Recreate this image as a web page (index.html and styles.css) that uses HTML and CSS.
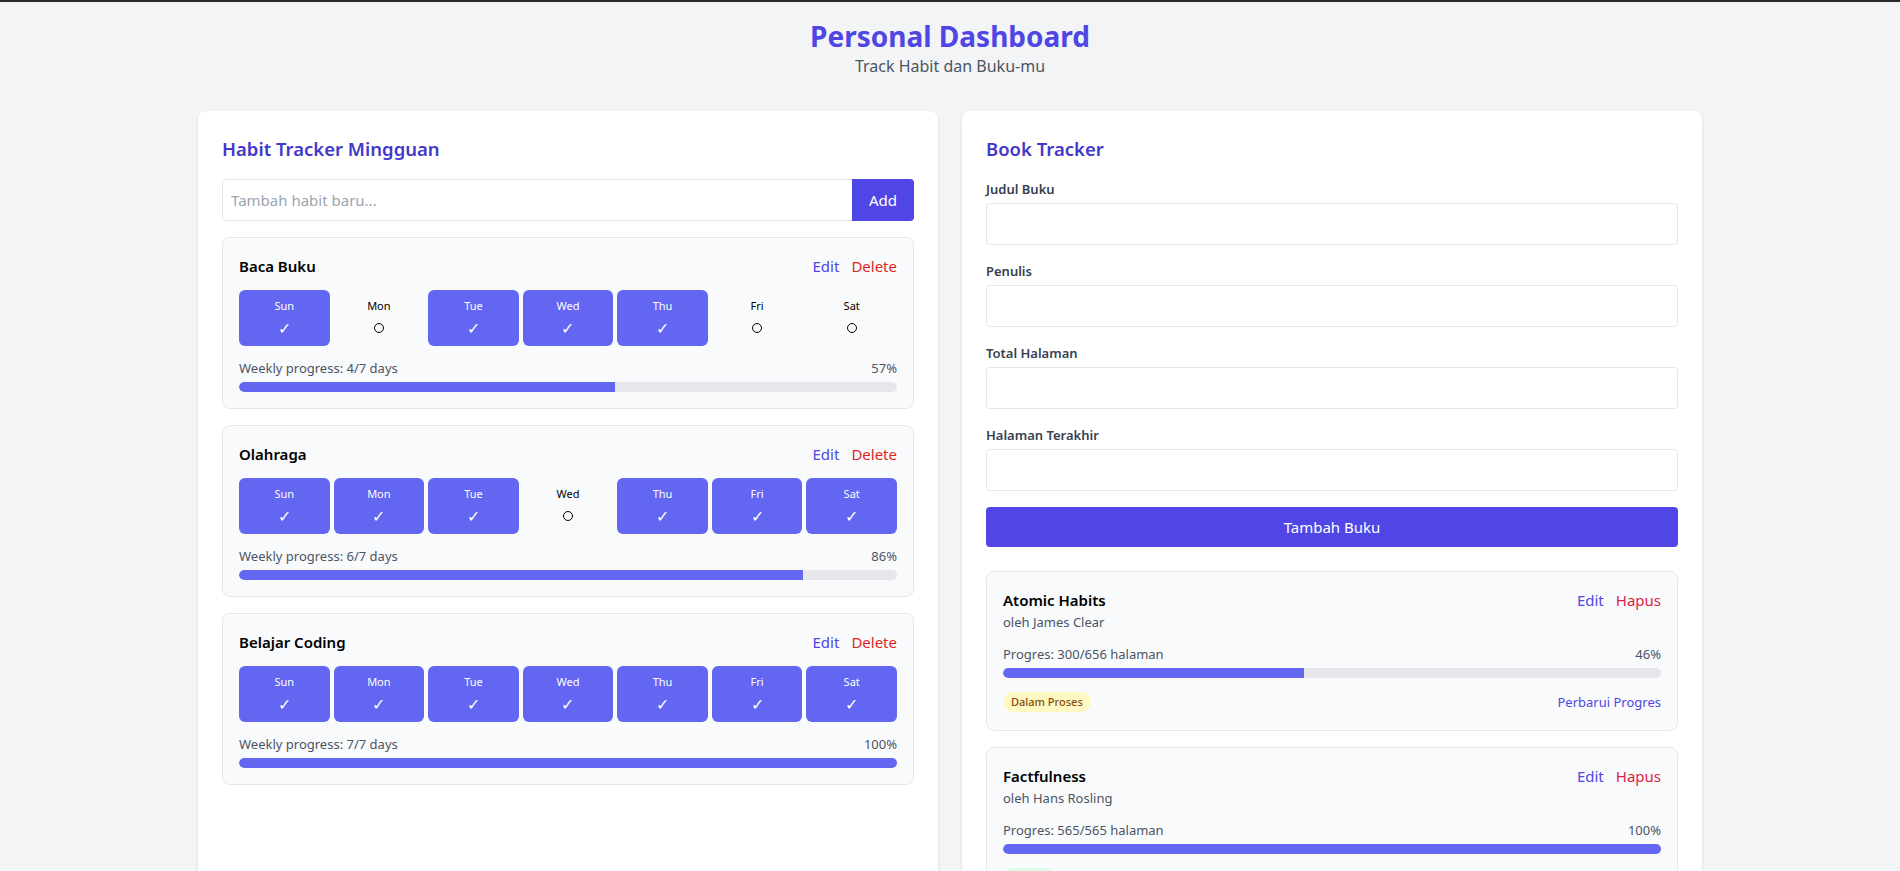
FILE: index.html
```html
<!DOCTYPE html>
<html lang="id">
<head>
<meta charset="utf-8">
<title>Personal Dashboard</title>
<link rel="stylesheet" href="styles.css">
</head>
<body>
<div class="topbar"></div>
<div class="container">
  <header class="header">
    <h1 class="title">Personal Dashboard</h1>
    <p class="subtitle">Track Habit dan Buku-mu</p>
  </header>

  <div class="grid">
    <section class="card">
      <h2 class="card-title">Habit Tracker Mingguan</h2>
      <div class="add-row">
        <input class="add-input" type="text" placeholder="Tambah habit baru...">
        <button class="add-btn">Add</button>
      </div>

      <div class="list">
        <div class="item">
          <div class="item-head">
            <span class="item-name">Baca Buku</span>
            <div class="actions"><button class="act edit">Edit</button><button class="act del">Delete</button></div>
          </div>
          <div class="days">
            <div class="day on"><span class="dl">Sun</span><span class="dm">✓</span></div>
            <div class="day"><span class="dl">Mon</span><span class="dm"><span class="ring"></span></span></div>
            <div class="day on"><span class="dl">Tue</span><span class="dm">✓</span></div>
            <div class="day on"><span class="dl">Wed</span><span class="dm">✓</span></div>
            <div class="day on"><span class="dl">Thu</span><span class="dm">✓</span></div>
            <div class="day"><span class="dl">Fri</span><span class="dm"><span class="ring"></span></span></div>
            <div class="day"><span class="dl">Sat</span><span class="dm"><span class="ring"></span></span></div>
          </div>
          <div class="prog-row"><span>Weekly progress: 4/7 days</span><span>57%</span></div>
          <div class="bar"><div class="fill" style="width:57.14%"></div></div>
        </div>

        <div class="item">
          <div class="item-head">
            <span class="item-name">Olahraga</span>
            <div class="actions"><button class="act edit">Edit</button><button class="act del">Delete</button></div>
          </div>
          <div class="days">
            <div class="day on"><span class="dl">Sun</span><span class="dm">✓</span></div>
            <div class="day on"><span class="dl">Mon</span><span class="dm">✓</span></div>
            <div class="day on"><span class="dl">Tue</span><span class="dm">✓</span></div>
            <div class="day"><span class="dl">Wed</span><span class="dm"><span class="ring"></span></span></div>
            <div class="day on"><span class="dl">Thu</span><span class="dm">✓</span></div>
            <div class="day on"><span class="dl">Fri</span><span class="dm">✓</span></div>
            <div class="day on"><span class="dl">Sat</span><span class="dm">✓</span></div>
          </div>
          <div class="prog-row"><span>Weekly progress: 6/7 days</span><span>86%</span></div>
          <div class="bar"><div class="fill" style="width:85.71%"></div></div>
        </div>

        <div class="item">
          <div class="item-head">
            <span class="item-name">Belajar Coding</span>
            <div class="actions"><button class="act edit">Edit</button><button class="act del">Delete</button></div>
          </div>
          <div class="days">
            <div class="day on"><span class="dl">Sun</span><span class="dm">✓</span></div>
            <div class="day on"><span class="dl">Mon</span><span class="dm">✓</span></div>
            <div class="day on"><span class="dl">Tue</span><span class="dm">✓</span></div>
            <div class="day on"><span class="dl">Wed</span><span class="dm">✓</span></div>
            <div class="day on"><span class="dl">Thu</span><span class="dm">✓</span></div>
            <div class="day on"><span class="dl">Fri</span><span class="dm">✓</span></div>
            <div class="day on"><span class="dl">Sat</span><span class="dm">✓</span></div>
          </div>
          <div class="prog-row"><span>Weekly progress: 7/7 days</span><span>100%</span></div>
          <div class="bar"><div class="fill" style="width:100%"></div></div>
        </div>
      </div>
    </section>

    <section class="card">
      <h2 class="card-title">Book Tracker</h2>
      <form class="book-form">
        <label class="field"><span class="label">Judul Buku</span><input class="text-input" type="text"></label>
        <label class="field"><span class="label">Penulis</span><input class="text-input" type="text"></label>
        <label class="field"><span class="label">Total Halaman</span><input class="text-input" type="text"></label>
        <label class="field"><span class="label">Halaman Terakhir</span><input class="text-input" type="text"></label>
        <button class="submit" type="button">Tambah Buku</button>
      </form>

      <div class="list books">
        <div class="item">
          <div class="item-head">
            <div>
              <div class="item-name">Atomic Habits</div>
              <div class="author">oleh James Clear</div>
            </div>
            <div class="actions"><button class="act edit">Edit</button><button class="act hapus">Hapus</button></div>
          </div>
          <div class="prog-row book-prog"><span>Progres: 300/656 halaman</span><span>46%</span></div>
          <div class="bar"><div class="fill" style="width:45.73%"></div></div>
          <div class="book-foot">
            <span class="badge yellow">Dalam Proses</span>
            <button class="act update">Perbarui Progres</button>
          </div>
        </div>

        <div class="item">
          <div class="item-head">
            <div>
              <div class="item-name">Factfulness</div>
              <div class="author">oleh Hans Rosling</div>
            </div>
            <div class="actions"><button class="act edit">Edit</button><button class="act hapus">Hapus</button></div>
          </div>
          <div class="prog-row book-prog"><span>Progres: 565/565 halaman</span><span>100%</span></div>
          <div class="bar"><div class="fill" style="width:100%"></div></div>
          <div class="book-foot">
            <span class="badge green">Selesai</span>
          </div>
        </div>
      </div>
    </section>
  </div>
</div>
</body>
</html>
```

FILE: styles.css
```css
* { box-sizing: border-box; }

body {
  margin: 0;
  background: #f3f4f6;
  font-family: "Noto Sans", "Open Sans", sans-serif;
  color: #111827;
}

.topbar {
  height: 2px;
  background: #2b2b2b;
}

.container {
  max-width: 1536px;
  margin: 0 auto;
  padding: 16px 16px 32px;
}

.header {
  text-align: center;
  margin-bottom: 33px;
}

.title {
  margin: 0;
  font-size: 28px;
  line-height: 36px;
  font-weight: 700;
  color: #4f46e5;
}

.subtitle {
  margin: 0;
  font-size: 16px;
  line-height: 24px;
  color: #4b5563;
}

.grid {
  display: grid;
  grid-template-columns: 1fr 1fr;
  gap: 24px;
}

.card {
  background: #fff;
  border-radius: 8px;
  box-shadow: 0 1px 3px rgba(0,0,0,0.1), 0 1px 2px rgba(0,0,0,0.06);
  padding: 24px;
  min-height: 900px;
}

.card-title {
  margin: 0 0 16px;
  font-size: 18.5px;
  line-height: 28px;
  font-weight: 600;
  color: #4338ca;
}

.add-row {
  display: flex;
  margin-bottom: 16px;
}

.add-input {
  flex: 1;
  height: 42px;
  padding: 8px;
  border: 1px solid #e5e7eb;
  border-right: none;
  border-radius: 4px 0 0 4px;
  font: inherit;
  font-size: 15px;
  outline: none;
}

.add-input::placeholder { color: #9ca3af; }

.add-btn {
  width: 62px;
  height: 42px;
  border: none;
  border-radius: 0 4px 4px 0;
  background: #4f46e5;
  color: #fff;
  font: inherit;
  font-size: 15px;
  padding: 0;
}

.list {
  display: flex;
  flex-direction: column;
  gap: 16px;
}

.item {
  background: #f9fafb;
  border: 1px solid #e5e7eb;
  border-radius: 8px;
  padding: 16px;
}

.item-head {
  display: flex;
  justify-content: space-between;
  align-items: flex-start;
  margin-bottom: 12px;
}

.item-name {
  font-size: 15px;
  line-height: 24px;
  font-weight: 600;
  color: #000;
}

.actions {
  display: flex;
  gap: 12px;
}

.act {
  background: none;
  border: none;
  padding: 0;
  font: inherit;
  font-size: 15px;
  line-height: 24px;
  cursor: pointer;
}

.edit { color: #4f46e5; }
.del { color: #dc2626; }
.hapus { color: #e11d48; }

.days {
  display: grid;
  grid-template-columns: repeat(7, 1fr);
  gap: 4px;
}

.day {
  height: 56px;
  padding: 8px 0;
  border-radius: 6px;
  display: flex;
  flex-direction: column;
  align-items: center;
  color: #000;
}

.day.on {
  background: #6366f1;
  color: #fff;
}

.dl {
  font-size: 11px;
  line-height: 16px;
}

.dm {
  margin-top: 4px;
  height: 20px;
  font-size: 16px;
  line-height: 20px;
  display: flex;
  align-items: center;
  justify-content: center;
}

.ring {
  display: block;
  width: 10px;
  height: 10px;
  border: 1.3px solid #000;
  border-radius: 50%;
}

.prog-row {
  display: flex;
  justify-content: space-between;
  margin-top: 12px;
  margin-bottom: 4px;
  font-size: 13px;
  line-height: 20px;
  color: #4b5563;
}

.bar {
  height: 10px;
  background: #e5e7eb;
  border-radius: 9999px;
  overflow: hidden;
}

.fill {
  height: 100%;
  background: #6366f1;
  border-radius: 9999px 0 0 9999px;
}

.book-form {
  display: flex;
  flex-direction: column;
}

.field {
  display: flex;
  flex-direction: column;
  margin-bottom: 16px;
}

.label {
  font-size: 13px;
  line-height: 20px;
  font-weight: 600;
  color: #374151;
  margin-bottom: 4px;
}

.text-input {
  height: 42px;
  padding: 8px;
  border: 1px solid #e5e7eb;
  border-radius: 4px;
  font: inherit;
  outline: none;
  background: #fff;
}

.submit {
  height: 40px;
  border: none;
  border-radius: 4px;
  background: #4f46e5;
  color: #fff;
  font: inherit;
  font-size: 15px;
}

.books { margin-top: 24px; }

.books .item-head { margin-bottom: 0; }

.author {
  font-size: 13px;
  line-height: 20px;
  color: #4b5563;
}

.book-prog { margin-top: 12px; }

.book-foot {
  display: flex;
  justify-content: space-between;
  align-items: center;
  margin-top: 12px;
  min-height: 24px;
}

.badge {
  font-size: 11px;
  line-height: 16px;
  font-weight: 500;
  padding: 2px 8px;
  border-radius: 9999px;
}

.badge.yellow { background: #fef9c3; color: #854d0e; }
.badge.green { background: #dcfce7; color: #166534; }

.update {
  font-size: 13px;
  line-height: 20px;
  color: #4f46e5;
}
```
